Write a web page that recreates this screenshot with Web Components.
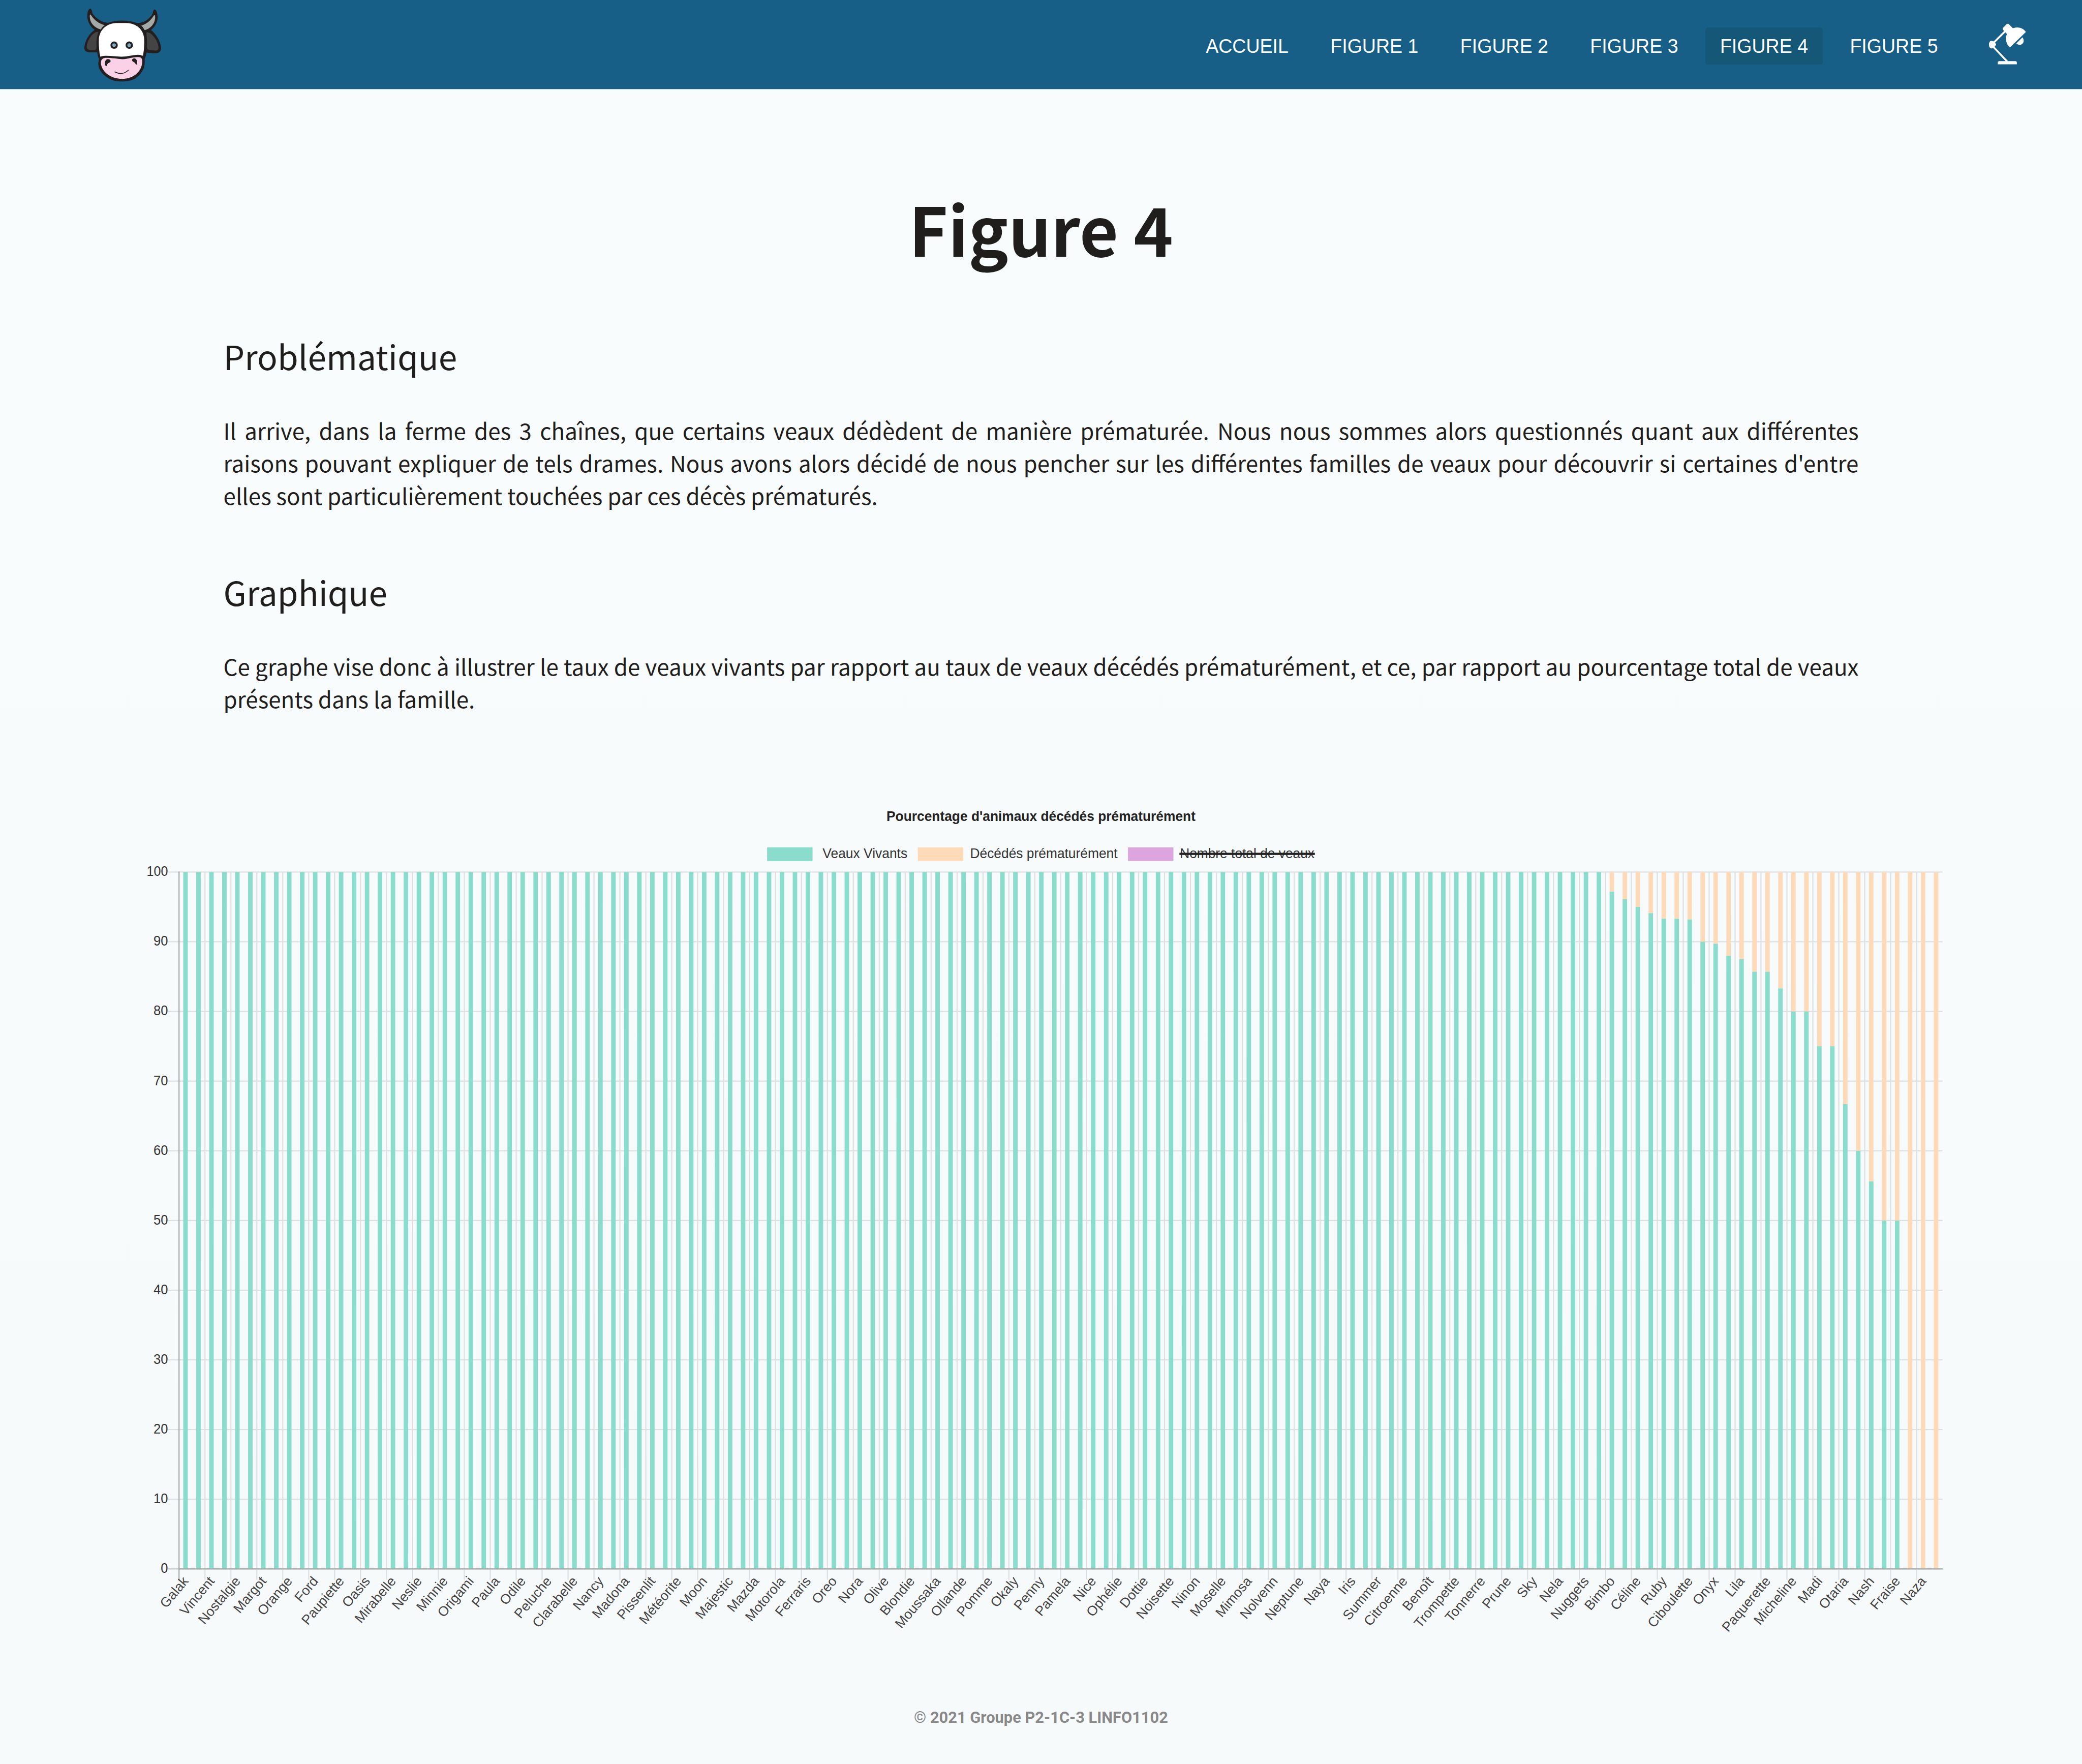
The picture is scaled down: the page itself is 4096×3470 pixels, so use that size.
<!DOCTYPE html>
<html lang="fr">
<head>
<meta charset="utf-8">
<title>Figure 4</title>
<style>
html{font-size:79.058px}
body{margin:0;background:#f7fafb;color:#1f1e1c;font-family:"Noto Sans CJK JP","Noto Sans",sans-serif}
</style>
</head>
<body>
<farm-page>
  <farm-header slot="header">
    <nav-link>ACCUEIL</nav-link><nav-link>FIGURE 1</nav-link><nav-link>FIGURE 2</nav-link><nav-link>FIGURE 3</nav-link><nav-link active>FIGURE 4</nav-link><nav-link>FIGURE 5</nav-link>
  </farm-header>
  <page-title>Figure 4</page-title>
  <text-section><span slot="heading">Problématique</span>Il arrive, dans la ferme des 3 chaînes, que certains veaux dédèdent de manière prématurée. Nous nous sommes alors questionnés quant aux différentes raisons pouvant expliquer de tels drames. Nous avons alors décidé de nous pencher sur les différentes familles de veaux pour découvrir si certaines d'entre elles sont particulièrement touchées par ces décès prématurés.</text-section>
  <text-section><span slot="heading">Graphique</span>Ce graphe vise donc à illustrer le taux de veaux vivants par rapport au taux de veaux décédés prématurément, et ce, par rapport au pourcentage total de veaux présents dans la famille.</text-section>
  <bar-chart></bar-chart>
  <farm-footer slot="footer">© 2021 Groupe P2-1C-3 LINFO1102</farm-footer>
</farm-page>
<script>
const define = (name, html, init) => customElements.define(name, class extends HTMLElement {
  constructor() {
    super();
    this.attachShadow({mode: 'open'}).innerHTML = html;
    if (init) init(this.shadowRoot, this);
  }
});

define('farm-page', `<style>
:host{display:flex;flex-direction:column;height:43.89rem;overflow:hidden;background:linear-gradient(#f8fcfd,#f7fbfc 50%,#f7fafb)}
main{display:flex;flex-direction:column;flex:1}
</style><slot name="header"></slot><main><slot></slot></main><slot name="footer"></slot>`);

define('farm-header', `<style>
:host{display:flex;box-sizing:border-box;height:2.23rem;background:#175f86;border-bottom:.01rem solid #a9cbdc;align-items:center;justify-content:space-between;padding:0 1.3rem 0 1.8rem}
nav{display:flex;align-items:center;gap:.322rem;height:100%;padding-top:.08rem;box-sizing:border-box}
.right{display:flex;align-items:center;gap:.68rem;height:100%}
</style>
<cow-logo></cow-logo><div class="right"><nav><slot></slot></nav><lamp-icon></lamp-icon></div>`);

define('nav-link', `<style>
:host{display:flex;align-items:center;justify-content:center;box-sizing:border-box;height:.92rem;padding:0 .36rem;border-radius:.08rem;color:#fff;font:.475rem/1 "Liberation Sans",Arial,sans-serif;white-space:nowrap}
:host([active]){background:#145777}
span{transform:scaleY(1.05)}
</style><span><slot></slot></span>`);

define('cow-logo', `<style>:host{display:block;width:2.6rem;height:2.2rem}svg{display:block;width:100%;height:100%}</style>
<svg viewBox="0 0 780 660">
<g fill="#231f20">
<path d="M135 60C144 62 149 78 152 98C180 135 215 160 265 167C330 144 420 144 485 169C535 170 575 140 600 100C603 80 608 66 616 66C632 70 638 100 638 133C632 175 614 200 588 220C625 248 655 295 664 350C665 385 645 395 605 394L555 389C552 410 546 428 541 438C548 510 515 552 470 583C415 612 325 612 275 583C225 552 190 515 196 460L200 436C194 425 190 405 187 387L135 387C100 385 88 372 91 345C100 290 128 247 168 220C135 195 115 160 113 120C113 85 122 62 135 60Z"/></g>
<path fill="#fff" d="M210 419C200 380 198 330 199 290C205 215 260 170 330 168H405C480 170 530 215 537 280Q541 350 529 411Q520 413 513 407C475 398 430 419 370 419C310 420 260 405 210 419Z"/>
<path fill="#fbd1e8" d="M214 462C216 435 235 427 260 428C320 430 350 438 375 438C415 438 450 420 500 422C525 426 526 450 521 475C510 540 450 585 370 585C285 583 216 530 214 462Z"/>
<path fill="#a7a9a8" d="M132 106Q137 102 142 111C165 147 200 173 243 184Q226 195 213 216C165 202 125 165 132 106ZM618 110Q612 106 606 118C585 150 555 178 516 187Q530 200 541 221C585 212 628 165 618 110Z"/>
<path fill="#434443" d="M196 234Q178 230 155 250C125 280 110 315 108 350Q111 368 132 369H169Q182 365 182 345C179 300 184 270 196 234ZM554 240Q565 232 592 251C625 280 643 320 645 354Q642 374 620 374L575 370Q558 365 558 345C560 305 557 270 554 240Z"/>
<g fill="#7da9bd" stroke="#231f20" stroke-width="14"><circle cx="313" cy="333" r="20.500"/><circle cx="426" cy="333" r="20.500"/></g>
<path fill="#231f20" d="M252 491C241 480 240 438 268 437C288 439 294 456 277 464Q260 470 257 489ZM480 479C490 465 486 434 462 432C443 434 443 454 458 458Q470 462 475 475Z"/>
<path fill="none" stroke="#231f20" stroke-width="6" stroke-linecap="round" d="M319 533Q375 562 420 520"/>
</svg>`);

define('lamp-icon', `<style>:host{display:block;width:2rem;height:1.6rem;margin-right:-.49rem;margin-left:-.265rem}svg{display:block;width:100%;height:100%}</style>
<svg viewBox="0 0 600 480"><g fill="#fff">
<path d="M279 90Q288 83 297 90L326 120C362 107 398 114 424 147L305 263C277 240 266 197 282 163L270 149L252 131Q247 124 253 117Z"/>
<path d="M398 188C410 205 411 224 396 237C382 248 365 243 352 233Z"/>
<path d="M148 242C149 220 159 210 174 215Q189 217 195 229L202 242L190 258Q181 272 166 270Q148 267 148 242Z"/>
<path d="M213 389V375Q214 366 224 365H345Q356 366 356 376V389Z"/></g>
<path fill="none" stroke="#fff" stroke-width="14" d="M270 141L184 227M182 260L284 368"/></svg>`);

define('page-title', `<style>
:host{display:block;margin-top:2.035rem;text-align:center;font-size:1.667rem;line-height:2.8rem;font-weight:700}
h1{font:inherit;margin:0}</style><h1><slot></slot></h1>`);

define('text-section', `<style>
:host{display:block;padding:0 5.56rem}
h2{font-size:.8335rem;line-height:1.2rem;font-weight:400;margin:1.2rem 0 .83rem}
p{font-size:.5557rem;line-height:.81rem;margin:0;text-align:justify}
:host(:nth-of-type(2)) h2{margin-top:1.405rem}
</style><h2><slot name="heading"></slot></h2><p><slot></slot></p>`);

const names = 'Galak Vincent Nostalgie Margot Orange Ford Paupiette Oasis Mirabelle Neslie Minnie Origami Paula Odile Peluche Clarabelle Nancy Madona Pissenlit Météorite Moon Majestic Mazda Motorola Ferraris Oreo Nora Olive Blondie Moussaka Ollande Pomme Okaly Penny Pamela Nice Ophélie Dottie Noisette Ninon Moselle Mimosa Nolvenn Neptune Naya Iris Summer Citroenne Benoît Trompette Tonnerre Prune Sky Nela Nuggets Bimbo Céline Ruby Ciboulette Onyx Lila Paquerette Micheline Madi Otaria Nash Fraise Naza'.split(' ');
const tail = [97.2, 96.1, 95, 94.1, 93.3, 93.3, 93.2, 90, 89.7, 88, 87.5, 85.7, 85.7, 83.3, 80, 80, 75, 75, 66.7, 60, 55.6, 50, 50, 0, 0, 0];

define('bar-chart', `<style>
:host{display:block;margin-top:1.82rem}
svg{display:block;width:51.81rem;height:21.5rem;font-family:"Liberation Sans",Arial,sans-serif}
</style><svg viewBox="0 1960 5181 2150"></svg>`, root => {
  const left = 445.5, step = 4388.5 / 136, top = 2170.5, base = 3904.5, h = base - top;
  const rect = (x, y, w, hh, f) => `<rect x="${x.toFixed(2)}" y="${y.toFixed(2)}" width="${w.toFixed(2)}" height="${hh.toFixed(2)}" fill="${f}"/>`;
  let s = '';
  for (let i = 0; i <= 10; i++) {
    const y = base - h * i / 10;
    s += rect(418, y - 1.4, 4416, 2.8, i ? '#dde0e2' : '#c4c7c8');
    s += `<text x="418" y="${y + 10}" font-size="36" text-anchor="end" fill="#333" textLength="${i == 10 ? 53 : i ? 36 : 18}" lengthAdjust="spacingAndGlyphs">${i * 10}</text>`;
  }
  for (let i = 1; i < 68; i++) s += rect(left + step * 2 * i - 1.4, top, 2.8, h + 27, '#dde0e2');
  for (let i = 0; i < 136; i++) {
    const v = i < 110 ? 100 : tail[i - 110], x = left + step * (i + .5) - 5.6, y = base - h * v / 100;
    if (v < 100) s += rect(x, top, 11.2, (v ? y : base) - top, '#ffdab9');
    if (v > 0) s += rect(x, y, 11.2, base - y, '#8adccd');
  }
  s += rect(left - 1.4, top - 1.4, 2.8, h + 28, '#a6a8a9') + rect(left, base - 1.4, 4388.5, 2.8, '#a6a8a9');
  names.forEach((n, i) => {
    const x = left + step * (2 * i + .5);
    s += `<text transform="translate(${x.toFixed(1)} 3928) rotate(-50)" y="12" font-size="34" text-anchor="end" fill="#444">${n}</text>`;
  });
  s += `<text x="2590.500" y="2044" font-size="36" font-weight="700" text-anchor="middle" fill="#222" textLength="769" lengthAdjust="spacingAndGlyphs">Pourcentage d'animaux décédés prématurément</text>`;
  [[1909, '#8adccd', 2047, 211, 'Veaux Vivants'], [2284, '#ffdab9', 2414, 367, 'Décédés prématurément'], [2807, '#dda5dd', 2936, 335, 'Nombre total de veaux']].forEach(([bx, c, tx, w, t]) => {
    s += rect(bx, 2109, 113, 34, c) + `<text x="${tx}" y="2136" font-size="36" fill="#333" textLength="${w}" lengthAdjust="spacingAndGlyphs">${t}</text>`;
  });
  s += rect(2935, 2122.5, 337, 5.5, '#222');
  root.querySelector('svg').innerHTML = s;
});

define('farm-footer', `<style>
:host{display:flex;box-sizing:border-box;justify-content:center;align-items:center;height:2.4rem;padding-top:.1rem;font:700 .39rem/1 Roboto,sans-serif;color:#898989}
</style><slot></slot>`);
</script>
</body>
</html>
